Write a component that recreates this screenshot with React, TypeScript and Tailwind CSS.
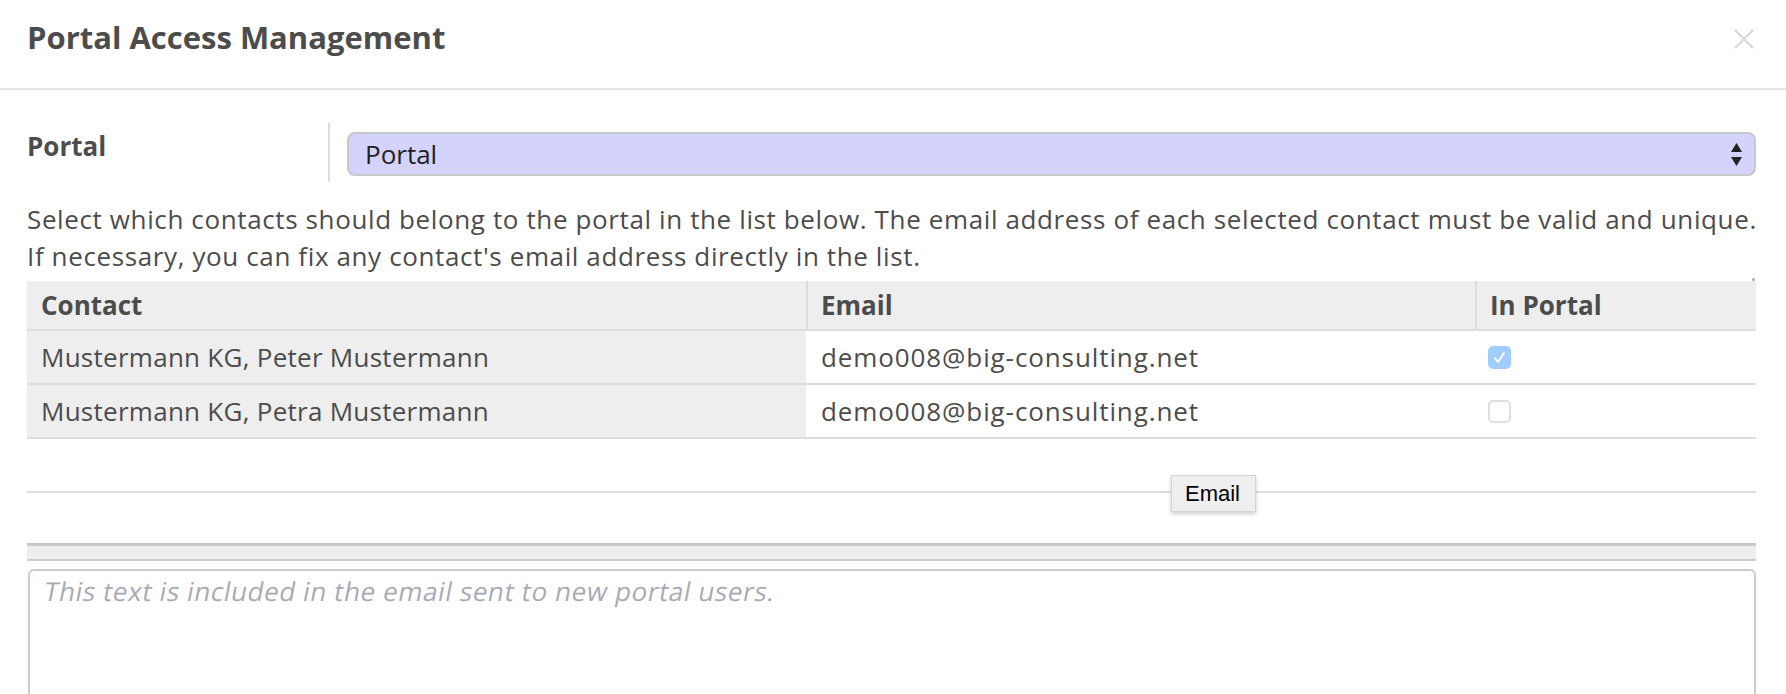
import React from "react";

export default function App() {
  return (
    <div className="relative w-[1786px] h-[694px] overflow-hidden bg-white text-[#4c4c4c] font-['Open_Sans','DejaVu_Sans',sans-serif]">
      {/* Header */}
      <div className="h-[90px] border-b-2 border-[#e5e5e5] flex items-start justify-between pl-[27px] pr-[30px] pt-[15px]">
        <h4 className="text-[31px] leading-[44px] font-bold text-[#4c4c4c]">Portal Access Management</h4>
        <svg className="mt-[14px]" width="24" height="20" viewBox="0 0 24 20">
          <line x1="3" y1="1" x2="21" y2="19" stroke="#d6d6d6" strokeWidth="2.2" />
          <line x1="21" y1="1" x2="3" y2="19" stroke="#d6d6d6" strokeWidth="2.2" />
        </svg>
      </div>

      {/* Body */}
      <div className="pl-[27px] pr-[30px]">
        {/* Portal row */}
        <div className="mt-[33px] flex h-[59px]">
          <div className="w-[303px] border-r-2 border-[#dddddd] pt-[5px]">
            <span className="text-[26px] leading-[37px] font-bold">Portal</span>
          </div>
          <div className="ml-[17px] mt-[9px] h-[44px] flex-1 rounded-[8px] border-2 border-[#c8c8c8] bg-[#d3d3fd] pl-[16px] pr-[12px] flex items-center justify-between">
            <span className="text-[26px] leading-[37px] text-[#222222]">Portal</span>
            <svg width="11" height="23" viewBox="0 0 11 23">
              <polygon points="5.5,0 11,9 0,9" fill="#222222" />
              <polygon points="0,14 11,14 5.5,23" fill="#222222" />
            </svg>
          </div>
        </div>

        {/* Description */}
        <div className="mt-[19px] text-[26px] leading-[37px] tracking-[0.62px]">
          <div className="whitespace-nowrap">
            Select which contacts should belong to the portal in the list below. The email address of each selected contact must be valid and unique.
          </div>
          <div className="whitespace-nowrap">
            If necessary, you can fix any contact's email address directly in the list.
          </div>
        </div>

        {/* Table */}
        <div className="mt-[6px] text-[26px] leading-[37px]">
          <div className="grid grid-cols-[779px_669px_1fr] h-[50px] bg-[#eeeeee] border-b-2 border-[#dddddd] font-bold">
            <div className="pl-[14px] flex items-center">Contact</div>
            <div className="pl-[13px] flex items-center border-l-2 border-[#dcdcdc]">Email</div>
            <div className="pl-[13px] flex items-center border-l-2 border-[#dcdcdc]">In Portal</div>
          </div>
          <div className="grid grid-cols-[779px_669px_1fr] h-[54px] border-b-2 border-[#dddddd]">
            <div className="pl-[14px] flex items-center bg-[#eeeeee] tracking-[0.27px]">Mustermann KG, Peter Mustermann</div>
            <div className="pl-[15px] flex items-center tracking-[0.9px]">demo008@big-consulting.net</div>
            <div className="pl-[13px] flex items-center">
              <div className="w-[23px] h-[23px] rounded-[5px] bg-[#a0cdfc] flex items-center justify-center">
                <svg width="15" height="15" viewBox="0 0 15 15">
                  <polyline points="3,8 6,12 12,3" fill="none" stroke="#ffffff" strokeWidth="2" strokeLinecap="round" strokeLinejoin="round" />
                </svg>
              </div>
            </div>
          </div>
          <div className="grid grid-cols-[779px_669px_1fr] h-[54px] border-b-2 border-[#dddddd]">
            <div className="pl-[14px] flex items-center bg-[#eeeeee] tracking-[0.27px]">Mustermann KG, Petra Mustermann</div>
            <div className="pl-[15px] flex items-center tracking-[0.9px]">demo008@big-consulting.net</div>
            <div className="pl-[13px] flex items-center">
              <div className="w-[23px] h-[23px] rounded-[5px] border-2 border-[#dedede] bg-white" />
            </div>
          </div>
        </div>

        {/* Separator line */}
        <div className="mt-[52px] h-[2px] bg-[#dddddd]" />

        {/* Editor toolbar band */}
        <div className="mt-[50px] border-t-[3px] border-[#c8c8c8] h-[18px] bg-[#eeeeee] border-b-2 border-b-[#cccccc]" />

        {/* Textarea */}
        <div className="mt-[8px] ml-[1px] h-[160px] rounded-t-[6px] border-2 border-[#cccccc] pl-[11px] pt-[2px]">
          <span className="inline-block origin-bottom-left -skew-x-[11deg] text-[26px] leading-[37px] tracking-[0.6px] text-[#a9a9b3]">This text is included in the email sent to new portal users.</span>
        </div>
      </div>

      {/* resize dot */}
      <div className="absolute left-[1752px] top-[278px] w-[3px] h-[3px] rounded-full bg-[#aaaaaa]" />

      {/* Native tooltip */}
      <div className="absolute left-[1171px] top-[475px] w-[85px] h-[37px] bg-[#efefef] border border-[#d4d4d4] shadow-[0_2px_4px_rgba(0,0,0,0.2)] flex items-center pl-[13px] font-['Liberation_Sans',Arial,sans-serif] text-[22px] text-black">
        Email
      </div>
    </div>
  );
}
